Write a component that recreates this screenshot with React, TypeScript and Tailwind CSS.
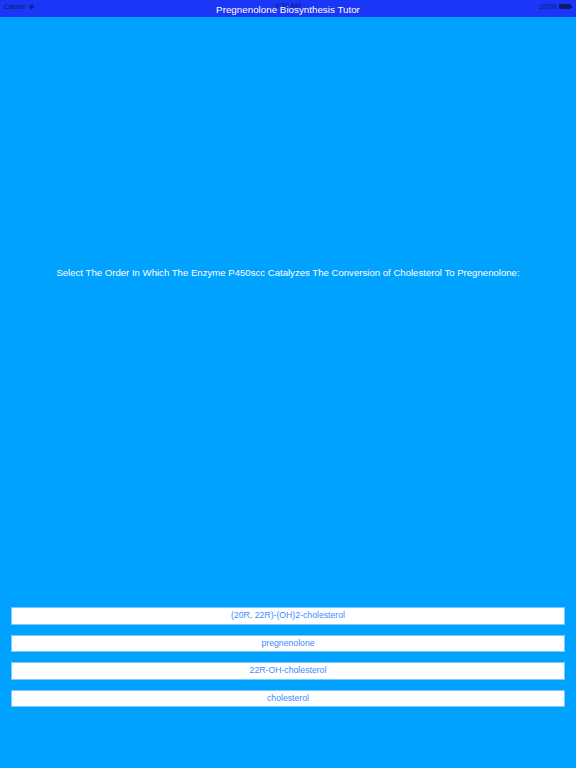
import React from "react";

const options = [
  "(20R, 22R)-(OH)2-cholesterol",
  "pregnenolone",
  "22R-OH-cholesterol",
  "cholesterol",
];

export default function App() {
  return (
    <div
      className="w-[576px] h-[768px] bg-[#00a2ff] flex flex-col overflow-hidden"
      style={{ fontFamily: '"Liberation Sans", Arial, sans-serif' }}
    >
      <div className="relative h-[17px] bg-[#1c36f7] flex items-center justify-center shrink-0">
        <div className="absolute left-[4px] top-[2px] flex items-center gap-[3px] text-[7px] leading-[9px] text-[#0b1a6e]">
          <span>Carrier</span>
          <svg width="7" height="6" viewBox="0 0 14 11">
            <path d="M7 10 L3 6 A6 6 0 0 1 11 6 Z" fill="#0b1a6e" />
            <path d="M1 4 A9 9 0 0 1 13 4" stroke="#0b1a6e" strokeWidth="1.6" fill="none" />
          </svg>
        </div>
        <div className="absolute left-0 right-0 top-[1px] text-center text-[7px] leading-[9px] text-[#0b1a6e]">
          4:30 AM
        </div>
        <div className="absolute right-[4px] top-[2px] flex items-center gap-[2px] text-[7px] leading-[9px] text-[#0b1a6e]">
          <span>100%</span>
          <div className="flex items-center">
            <div className="w-[12px] h-[5px] bg-[#0b1a6e] rounded-[1px]" />
            <div className="w-[1px] h-[2px] bg-[#0b1a6e]" />
          </div>
        </div>
        <div className="relative text-white text-[9.8px] leading-[12px] mt-[2px]">
          Pregnenolone Biosynthesis Tutor
        </div>
      </div>
      <div className="pt-[249px] text-center text-white text-[9.6px] leading-[13px]">
        Select The Order In Which The Enzyme P450scc Catalyzes The Conversion of Cholesterol To Pregnenolone:
      </div>
      <div className="mt-[328px] px-[11px] flex flex-col gap-[10px]">
        {options.map((o) => (
          <div
            key={o}
            className="h-[17.5px] bg-white border border-[#7cc8ff] flex items-center justify-center text-[8.7px] text-[#3a8cff]"
          >
            {o}
          </div>
        ))}
      </div>
    </div>
  );
}
